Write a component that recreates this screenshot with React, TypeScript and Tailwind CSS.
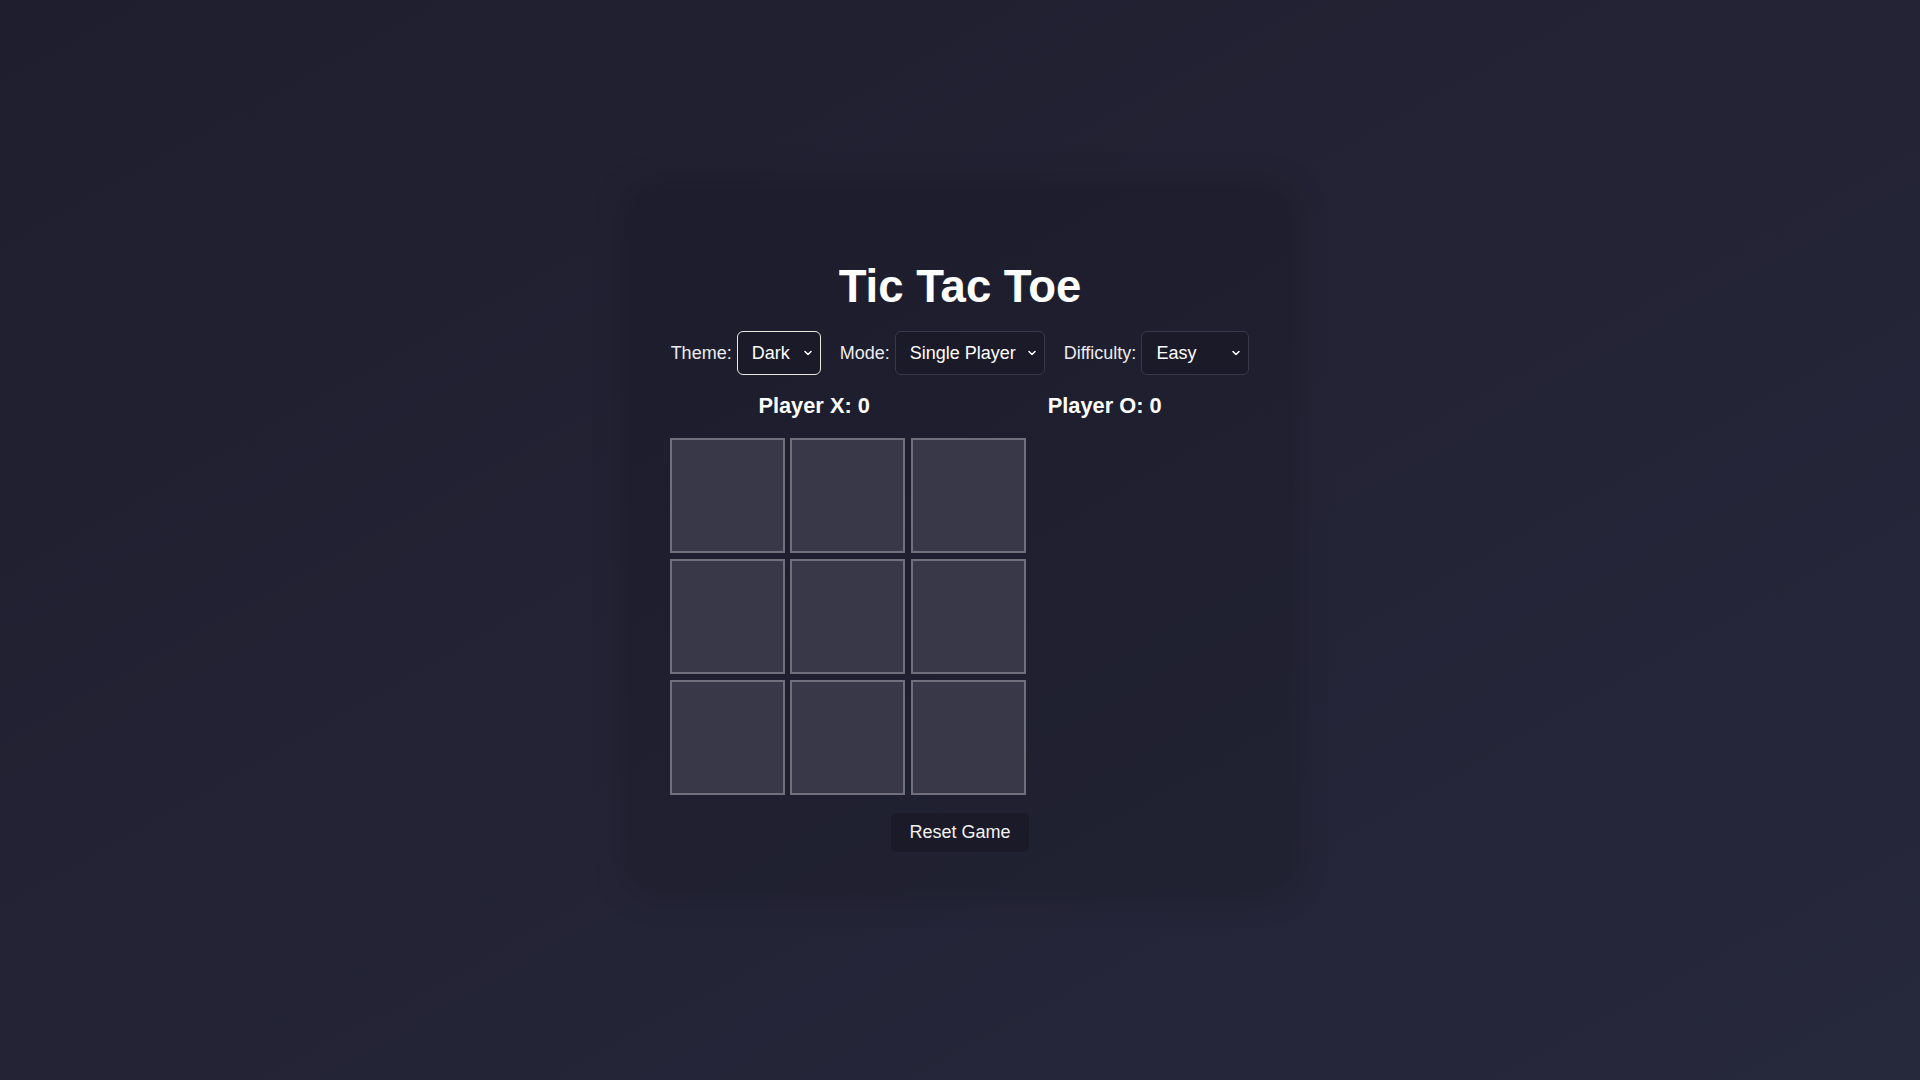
import React, { useState } from 'react';

type Cell = 'X' | 'O' | null;

const Chevron: React.FC = () => (
  <svg
    className="pointer-events-none absolute right-[9px] top-1/2 -translate-y-1/2"
    width="8"
    height="5"
    viewBox="0 0 8 5"
    fill="none"
  >
    <path d="M1 1l3 3 3-3" stroke="#ffffff" strokeWidth="1.5" strokeLinecap="round" strokeLinejoin="round" />
  </svg>
);

interface PickerProps {
  label: string;
  value: string;
  options: string[];
  width: string;
  focused?: boolean;
  onChange: (v: string) => void;
}

const Picker: React.FC<PickerProps> = ({ label, value, options, width, focused, onChange }) => (
  <div className="flex items-center gap-[5px]">
    <span className="text-[18px] text-[#ececf0]">{label}</span>
    <div className={`relative ${width}`}>
      <select
        value={value}
        onChange={(e) => onChange(e.target.value)}
        className={`h-[44px] w-full appearance-none rounded-[6px] border bg-[#1b1a28] pl-[14px] pr-[24px] text-[18px] text-white outline-none ${
          focused ? 'border-[#ebe8df]' : 'border-[#393848]'
        }`}
      >
        {options.map((o) => (
          <option key={o} value={o}>
            {o}
          </option>
        ))}
      </select>
      <Chevron />
    </div>
  </div>
);

const App: React.FC = () => {
  const [board, setBoard] = useState<Cell[]>(Array(9).fill(null));
  const [turn, setTurn] = useState<'X' | 'O'>('X');
  const [theme, setTheme] = useState('Dark');
  const [mode, setMode] = useState('Single Player');
  const [difficulty, setDifficulty] = useState('Easy');
  const [scores] = useState({ X: 0, O: 0 });

  const play = (i: number) => {
    if (board[i]) return;
    const next = [...board];
    next[i] = turn;
    setBoard(next);
    setTurn(turn === 'X' ? 'O' : 'X');
  };

  const reset = () => {
    setBoard(Array(9).fill(null));
    setTurn('X');
  };

  return (
    <div
      className="flex min-h-screen items-center justify-center bg-gradient-to-br from-[#1f1e2f] to-[#26283b] text-white"
      style={{ fontFamily: '"Liberation Sans", Arial, sans-serif' }}
    >
      <div className="w-[655px] rounded-[18px] bg-black/10 px-[37px] pt-[36px] pb-[36px] shadow-[0_0_40px_rgba(0,0,0,0.22)]">
        <h1 className="mt-[34px] mb-[19px] text-center text-[45.5px] leading-[50px] font-bold">Tic Tac Toe</h1>

        {/* Settings */}
        <div className="flex items-center justify-center gap-[19px]">
          <Picker label="Theme:" value={theme} options={['Dark', 'Light']} width="w-[84px]" focused onChange={setTheme} />
          <Picker
            label="Mode:"
            value={mode}
            options={['Single Player', 'Two Player']}
            width="w-[150px]"
            onChange={setMode}
          />
          <Picker
            label="Difficulty:"
            value={difficulty}
            options={['Easy', 'Medium', 'Hard']}
            width="w-[108px]"
            onChange={setDifficulty}
          />
        </div>

        {/* Scores */}
        <div className="mt-[18px] flex justify-around">
          <h2 className="text-[21.8px] leading-[25px] font-bold">Player X: {scores.X}</h2>
          <h2 className="text-[21.8px] leading-[25px] font-bold">Player O: {scores.O}</h2>
        </div>

        {/* Board */}
        <div className="mt-[20px] grid w-max grid-cols-[repeat(3,115px)] gap-x-[5.5px] gap-y-[6px]">
          {board.map((c, i) => (
            <button
              key={i}
              onClick={() => play(i)}
              className="h-[115px] w-[115px] border-2 border-[#706f7c] bg-[#393848] text-[56px] font-bold text-white"
            >
              {c}
            </button>
          ))}
        </div>

        <div className="mt-[18px] flex justify-center">
          <button
            onClick={reset}
            className="h-[39px] rounded-[6px] bg-[#1b1a28] px-[18px] text-[18px] text-[#f2f2f2]"
          >
            Reset Game
          </button>
        </div>
      </div>
    </div>
  );
};

export default App;
